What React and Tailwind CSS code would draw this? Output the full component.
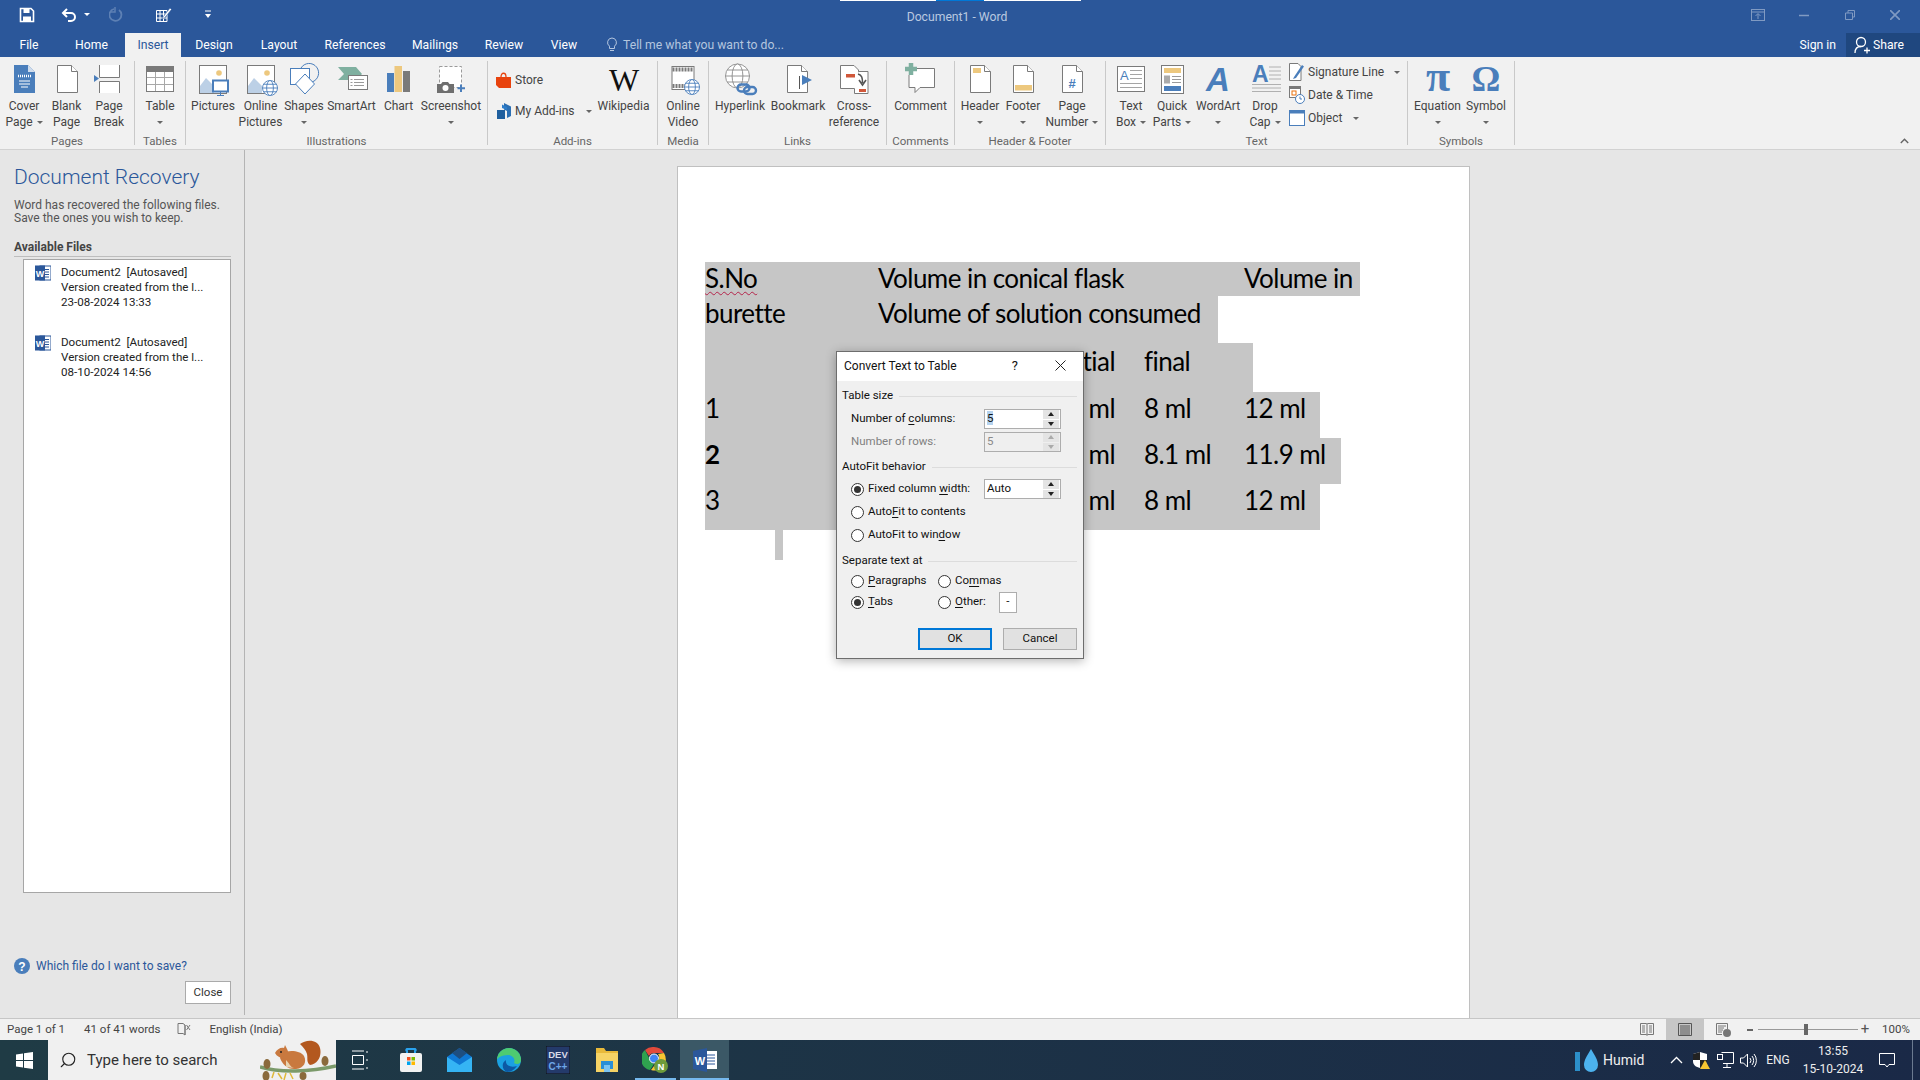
import React from 'react';
import { Search } from 'lucide-react';

const BLUE = '#4a7ebb';
const LINE = '#7a7a7a';
const YEL = '#edc87e';

const Svg = ({ children }) => (
  <svg width="40" height="37" viewBox="0 0 40 37" className="shrink-0 overflow-visible">{children}</svg>
);

const Page = ({ x = 10, fill = '#fff', stroke = LINE }) => (
  <>
    <path d={`M${x + 0.5} 4.5H${x + 14.5}L${x + 20.5} 10.5V31.5H${x + 0.5}Z`} fill={fill} stroke={stroke} />
    <path d={`M${x + 14.5} 4.5V10.5H${x + 20.5}`} fill="#fff" stroke={stroke} />
  </>
);

const Globe = ({ cx, cy, r, c = BLUE }) => (
  <g fill="#fff" stroke={c} strokeWidth="0.9">
    <circle cx={cx} cy={cy} r={r} />
    <ellipse cx={cx} cy={cy} rx={r * 0.45} ry={r} />
    <path d={`M${cx - r} ${cy}H${cx + r}M${cx - r * 0.85} ${cy - r * 0.5}H${cx + r * 0.85}M${cx - r * 0.85} ${cy + r * 0.5}H${cx + r * 0.85}`} />
  </g>
);

const icons = {
  cover: (
    <Svg>
      <path d="M10 4H24L31 11V32H10Z" fill={BLUE} />
      <path d="M24 4V11H31Z" fill="#cfdcec" />
      <path d="M14 15H27" stroke="#fff" strokeWidth="2.5" strokeDasharray="1 1" />
      <path d="M15 20H26M15 23H26M17 26H24" stroke="#fff" />
    </Svg>
  ),
  blank: <Svg><Page x={10} /></Svg>,
  pagebreak: (
    <Svg>
      <path d="M10.5 4V16.5H30.5V4M10.5 32V20.5H30.5V32" fill="#fff" stroke={LINE} />
      <path d="M5 14L10 17.5L5 21Z" fill={BLUE} />
    </Svg>
  ),
  table: (
    <Svg>
      <rect x="6.5" y="5.5" width="27" height="25" fill="#fff" stroke={LINE} />
      <rect x="6" y="5" width="28" height="6" fill="#7a7a7a" />
      <path d="M7 16.5H33M7 23.5H33M15.5 11V30M24.5 11V30" stroke="#a8a8a8" />
    </Svg>
  ),
  pictures: (
    <Svg>
      <rect x="6.5" y="4.5" width="27" height="28" fill="#fff" stroke={LINE} />
      <circle cx="26" cy="12" r="2.8" fill={YEL} />
      <path d="M7 32V25L13 17L21 25V32Z" fill="#bcd0e6" />
      <rect x="20" y="19.5" width="15" height="11" fill="#fff" stroke={BLUE} strokeWidth="2" />
      <path d="M27.5 31V34M24 34.5H31" stroke={BLUE} />
    </Svg>
  ),
  online: (
    <Svg>
      <rect x="6.5" y="4.5" width="27" height="28" fill="#fff" stroke={LINE} />
      <circle cx="26" cy="12" r="2.8" fill={YEL} />
      <path d="M7 32V25L13 17L21 25V32Z" fill="#bcd0e6" />
      <Globe cx={29} cy={27} r={7.5} />
    </Svg>
  ),
  shapes: (
    <Svg>
      <path d="M17 7A9.5 9.5 0 1 1 28 21" fill="none" stroke={BLUE} />
      <rect x="6.5" y="7.5" width="19" height="16" fill="#fff" stroke={BLUE} />
      <path d="M21 13L30.5 23L21 33L11.5 23Z" fill="#fff" stroke={BLUE} />
    </Svg>
  ),
  smartart: (
    <Svg>
      <path d="M6 6H24L30 13L24 19H6L12 13Z" fill="#7fb0a0" />
      <rect x="16.5" y="14.5" width="19" height="14" fill="#fff" stroke={LINE} />
      <path d="M22 18.5H32M22 21.5H32M22 24.5H32M18.5 18.5H20.5M18.5 21.5H20.5M18.5 24.5H20.5" stroke="#9a9a9a" />
    </Svg>
  ),
  chart: (
    <Svg>
      <rect x="8" y="12" width="7" height="19" fill={BLUE} />
      <rect x="15.5" y="5" width="7.5" height="26" fill={YEL} />
      <rect x="24" y="10" width="7" height="21" fill="#7a7a7a" />
    </Svg>
  ),
  screenshot: (
    <Svg>
      <rect x="8.5" y="5.5" width="22" height="21" fill="#fff" stroke="#9a9a9a" strokeDasharray="3 2" />
      <path d="M6 23H10L11.5 21H17L18.5 23H23V32H6Z" fill="#6f6f6f" />
      <circle cx="14.5" cy="27" r="3" fill="#fff" />
      <path d="M30 23.5V31M26.5 27.3H34" stroke={BLUE} strokeWidth="2" />
    </Svg>
  ),
  video: (
    <Svg>
      <rect x="9" y="5.5" width="22" height="23" fill="#fff" stroke={LINE} />
      <path d="M9.5 8.5H30.5M9.5 25H30.5" stroke={LINE} strokeWidth="4" strokeDasharray="2 1" />
      <Globe cx={29} cy={26} r={7.5} />
    </Svg>
  ),
  hyperlink: (
    <Svg>
      <Globe cx={17.5} cy={15} r={12} c="#8a8a8a" />
      <rect x="17.5" y="23.5" width="12" height="7" rx="3.5" fill="none" stroke={BLUE} strokeWidth="2.4" />
      <rect x="24" y="26" width="12" height="7" rx="3.5" fill="none" stroke={BLUE} strokeWidth="2.4" />
    </Svg>
  ),
  bookmark: (
    <Svg>
      <Page x={9} />
      <path d="M21.5 15V28" stroke="#555" />
      <path d="M24 14L34 19L24 24Z" fill={BLUE} />
    </Svg>
  ),
  crossref: (
    <Svg>
      <path d="M6.5 4.5H20L24.5 9V27.5H6.5Z" fill="#fff" stroke={LINE} />
      <path d="M24.5 10.5H34V32.5H20.5V27.5" fill="#fff" stroke={LINE} />
      <rect x="12" y="13" width="9" height="3.5" fill="#d0573a" />
      <rect x="25" y="28" width="7" height="3" fill="#d0573a" />
      <path d="M24 13C28 14 28.5 17 28.5 22M25 19L28.5 24L32 19" fill="none" stroke="#555" strokeWidth="1.6" />
    </Svg>
  ),
  comment: (
    <Svg>
      <path d="M10.5 7.5H33.5V26.5H19L14 31.5V26.5H8V14" fill="#fff" stroke={LINE} />
      <path d="M10 2V14M4 8H16" stroke="#7fb0a0" strokeWidth="4.5" />
    </Svg>
  ),
  header: <Svg><Page x={10} /><rect x="13" y="7" width="8" height="5" fill={YEL} /></Svg>,
  footer: <Svg><Page x={10} /><rect x="12" y="24" width="17" height="5.5" fill={YEL} /></Svg>,
  pagenum: (
    <Svg>
      <Page x={10} />
      <text x="20" y="27" textAnchor="middle" fontSize="13" fontWeight="700" fill={BLUE} fontFamily="Liberation Sans, sans-serif">#</text>
    </Svg>
  ),
  textbox: (
    <Svg>
      <rect x="6.5" y="5.5" width="27" height="25" fill="#fff" stroke={LINE} />
      <text x="9" y="19" fontSize="13" fill={BLUE} fontFamily="Liberation Sans, sans-serif">A</text>
      <path d="M19 9.5H31M19 13.5H31M19 17.5H31M9 22.5H31M9 26.5H31" stroke="#a5a5a5" />
    </Svg>
  ),
  quick: (
    <Svg>
      <rect x="9.5" y="4.5" width="22" height="28" fill="#fff" stroke={LINE} />
      <rect x="12" y="7" width="17" height="5" fill={YEL} />
      <rect x="12" y="14.5" width="6" height="8" fill="#aaa" />
      <path d="M20 15.5H29M20 18.5H29M20 21.5H29" stroke="#9a9a9a" />
      <rect x="12" y="25" width="17" height="5" fill={BLUE} />
    </Svg>
  ),
  wordart: (
    <Svg>
      <text x="20" y="30" textAnchor="middle" fontSize="33" fontWeight="700" fontStyle="italic" fill={BLUE} fontFamily="Liberation Sans, sans-serif">A</text>
    </Svg>
  ),
  dropcap: (
    <Svg>
      <text x="7" y="21" fontSize="23" fontWeight="700" fill={BLUE} fontFamily="Liberation Sans, sans-serif">A</text>
      <path d="M24 6H36M24 10H36M24 14H36M24 18H36M7 23.5H36M7 27H36M7 30.5H36" stroke="#b0b0b0" />
    </Svg>
  ),
  pi: (
    <Svg>
      <text x="20" y="30" textAnchor="middle" fontSize="44" fontWeight="700" fill={BLUE} fontFamily="Liberation Serif, serif">π</text>
    </Svg>
  ),
  omega: (
    <Svg>
      <text x="20" y="30" textAnchor="middle" fontSize="36" fontWeight="700" fill={BLUE} fontFamily="Liberation Serif, serif">Ω</text>
    </Svg>
  ),
};

const Caret = ({ className = '' }) => (
  <span className={`inline-block w-0 h-0 border-x-[3px] border-t-[3px] border-x-transparent border-t-[#666] align-middle ${className}`} />
);

// one big ribbon button: icon, up to two label lines, optional caret
function Btn({ w, icon, lines, caret }) {
  return (
    <div className="flex flex-col items-center shrink-0" style={{ width: w }}>
      <div className="h-[37px] flex justify-center w-full">{icons[icon]}</div>
      {lines.map((l, i) => (
        <div key={i} className="h-4 leading-4 whitespace-nowrap">
          {l}
          {caret && lines.length === 2 && i === 1 && <Caret className="ml-1" />}
        </div>
      ))}
      {caret && lines.length === 1 && <div className="h-4 leading-4"><Caret /></div>}
    </div>
  );
}

function Group({ w, label, pl = 0, children }) {
  return (
    <div className="h-[84px] flex flex-col border-r border-[#c9c9c9] shrink-0" style={{ width: w }}>
      <div className="h-[69px] flex" style={{ paddingLeft: pl }}>{children}</div>
      <div className="h-[15px] leading-[22px] text-center text-[11.5px] text-[#666]">{label}</div>
    </div>
  );
}

const Tab = ({ w, children, active }) => (
  <div
    className={`h-6 flex items-center justify-center shrink-0 ${active ? 'bg-[#f1f1f1] text-[#2b579a]' : 'text-white'}`}
    style={{ width: w }}
  >
    {children}
  </div>
);

function TitleBar() {
  return (
    <div className="h-[57px] bg-[#2b579a] flex flex-col relative text-[12.2px] shrink-0">
      <div className="absolute top-0 left-[840px] flex h-px">
        <div className="w-[96px] bg-white" />
        <div className="w-[48px] bg-[#0078d7]" />
        <div className="w-[97px] bg-white" />
      </div>
      <div className="h-[33px] flex items-center -mt-[2px]">
        <div className="flex-1 flex items-center">
          <svg width="16" height="16" viewBox="0 0 16 16" className="ml-[19px]">
            <path d="M1.5 1.5H12L14.5 4V14.5H1.5Z" fill="none" stroke="#fff" strokeWidth="1.6" />
            <rect x="4.5" y="2" width="6" height="4" fill="#fff" />
            <rect x="4" y="9.5" width="8" height="5" fill="#fff" />
          </svg>
          <svg width="16" height="14" viewBox="0 0 16 14" className="ml-[26px]">
            <path d="M6 1L2 5L6 9" fill="none" stroke="#fff" strokeWidth="2" />
            <path d="M2 5H10A3.8 3.8 0 0 1 10 13H7" fill="none" stroke="#fff" strokeWidth="2" />
          </svg>
          <Caret className="ml-[7px] !border-t-white" />
          <svg width="14" height="16" viewBox="0 0 14 16" className="ml-[19px] opacity-40">
            <path d="M5 2A6 6 0 1 0 10 3" fill="none" stroke="#a9bfdc" strokeWidth="1.8" />
            <path d="M6 0V5H1" fill="none" stroke="#a9bfdc" strokeWidth="1.5" />
          </svg>
          <svg width="18" height="18" viewBox="0 0 18 18" className="ml-[31px]">
            <path d="M2.5 4.5H13V15.5H2.5Z M2.5 8H13M2.5 12H13M6 4.5V15.5M9.5 4.5V15.5" fill="none" stroke="#fff" />
            <path d="M9 11L16 2L17.5 3.5L10.5 12L8.5 12.5Z" fill="#fff" stroke="#2b579a" strokeWidth="0.5" />
          </svg>
          <svg width="8" height="9" viewBox="0 0 8 9" className="ml-[32px]">
            <path d="M1 1H7" stroke="#fff" />
            <path d="M1 4H7L4 8Z" fill="#fff" />
          </svg>
        </div>
        <div className="text-[#b9c9e0] ml-[14px] mt-[5px]">Document1 - Word</div>
        <div className="flex-1 flex items-center justify-end pr-[20px] gap-[33px] opacity-40 text-white">
          <svg width="14" height="12" viewBox="0 0 14 12">
            <rect x="0.5" y="0.5" width="13" height="11" fill="none" stroke="#fff" />
            <path d="M0.5 3H13.5M7 10V5M4.5 7L7 4.5L9.5 7" fill="none" stroke="#fff" />
          </svg>
          <svg width="10" height="10" viewBox="0 0 10 10" className="ml-[1px]"><path d="M0 5.5H10" stroke="#fff" strokeWidth="1.5" /></svg>
          <svg width="10" height="10" viewBox="0 0 10 10" className="ml-[3px]">
            <path d="M0.5 3H7.5V9.5H0.5ZM3 3V0.5H9.5V7H7.5" fill="none" stroke="#fff" />
          </svg>
          <svg width="10" height="10" viewBox="0 0 10 10" className="ml-[2px]">
            <path d="M0 0L10 10M10 0L0 10" stroke="#fff" strokeWidth="1.6" />
          </svg>
        </div>
      </div>
      <div className="h-6 mt-[2px] flex items-center">
        <Tab w={58}>File</Tab>
        <Tab w={67}>Home</Tab>
        <Tab w={56} active>Insert</Tab>
        <Tab w={66}>Design</Tab>
        <Tab w={64}>Layout</Tab>
        <Tab w={88}>References</Tab>
        <Tab w={72}>Mailings</Tab>
        <Tab w={66}>Review</Tab>
        <Tab w={54}>View</Tab>
        <svg width="12" height="16" viewBox="0 0 12 16" className="ml-[15px]">
          <path d="M6 1A4.5 4.5 0 0 0 3.5 9.2V11.5H8.5V9.2A4.5 4.5 0 0 0 6 1ZM4 13.5H8" fill="none" stroke="#b4c6df" />
        </svg>
        <span className="ml-[5px] text-[#b4c6df]">Tell me what you want to do...</span>
        <div className="ml-auto flex items-center h-6">
          <span className="text-white mr-[10px]">Sign in</span>
          <div className="w-[74px] h-6 bg-[#1f477f] flex items-center text-white pl-2">
            <svg width="16" height="18" viewBox="0 0 16 18">
              <circle cx="7" cy="6" r="4.5" fill="none" stroke="#fff" strokeWidth="1.3" />
              <path d="M1 17C1 12 4 10.5 7 10.5M10 14.5H16M13 11.5V17.5" fill="none" stroke="#fff" strokeWidth="1.3" />
            </svg>
            <span className="ml-[3px]">Share</span>
          </div>
        </div>
      </div>
    </div>
  );
}

function Ribbon() {
  return (
    <div className="h-[93px] bg-[#f1f1f1] border-b border-[#d2d2d2] pt-1 flex text-[12px] text-[#444] shrink-0 relative">
      <Group w={135} label="Pages" pl={3}>
        <Btn w={42} icon="cover" lines={['Cover', 'Page']} caret />
        <Btn w={43} icon="blank" lines={['Blank', 'Page']} />
        <Btn w={42} icon="pagebreak" lines={['Page', 'Break']} />
      </Group>
      <Group w={51} label="Tables">
        <Btn w={50} icon="table" lines={['Table']} caret />
      </Group>
      <Group w={302} label="Illustrations" pl={3}>
        <Btn w={48} icon="pictures" lines={['Pictures']} />
        <Btn w={47} icon="online" lines={['Online', 'Pictures']} />
        <Btn w={40} icon="shapes" lines={['Shapes']} caret />
        <Btn w={55} icon="smartart" lines={['SmartArt']} />
        <Btn w={39} icon="chart" lines={['Chart']} />
        <Btn w={66} icon="screenshot" lines={['Screenshot']} caret />
      </Group>
      <Group w={170} label="Add-ins" pl={8}>
        <div className="w-[101px] shrink-0 flex flex-col">
          <div className="h-[18px] mt-[10px] flex items-center">
            <svg width="16" height="18" viewBox="0 0 16 18">
              <path d="M0 6H15V17H3L0 14Z" fill="#e8430e" />
              <path d="M5 6C5 1 10 1 10 6" fill="none" stroke="#e8430e" strokeWidth="1.3" />
            </svg>
            <span className="ml-[3px]">Store</span>
          </div>
          <div className="h-[18px] mt-[13px] flex items-center">
            <svg width="16" height="17" viewBox="0 0 16 17">
              <path d="M8 0L15 3.5V13L11 15V8L8 6.5V0Z" fill="#2b6fb3" />
              <rect x="1" y="7" width="8" height="9" fill="#1f5f9e" />
              <path d="M6 1.5L11 4V7L6 5Z" fill="#2b7cc9" />
            </svg>
            <span className="ml-[3px]">My Add-ins</span>
            <Caret className="ml-[11px]" />
          </div>
        </div>
        <div className="w-[53px] shrink-0 flex flex-col items-center">
          <div className="h-[37px] flex justify-center w-full">
            <Svg>
              <text x="20" y="30" textAnchor="middle" fontSize="32" fill="#111" fontFamily="Liberation Serif, serif">W</text>
            </Svg>
          </div>
          <div className="h-4 leading-4">Wikipedia</div>
        </div>
      </Group>
      <Group w={51} label="Media">
        <Btn w={50} icon="video" lines={['Online', 'Video']} />
      </Group>
      <Group w={178} label="Links" pl={2}>
        <Btn w={58} icon="hyperlink" lines={['Hyperlink']} />
        <Btn w={58} icon="bookmark" lines={['Bookmark']} />
        <Btn w={54} icon="crossref" lines={['Cross-', 'reference']} />
      </Group>
      <Group w={68} label="Comments">
        <Btn w={67} icon="comment" lines={['Comment']} />
      </Group>
      <Group w={151} label="Header & Footer" pl={2}>
        <Btn w={46} icon="header" lines={['Header']} caret />
        <Btn w={40} icon="footer" lines={['Footer']} caret />
        <Btn w={58} icon="pagenum" lines={['Page', 'Number']} caret />
      </Group>
      <Group w={302} label="Text" pl={4}>
        <Btn w={42} icon="textbox" lines={['Text', 'Box']} caret />
        <Btn w={40} icon="quick" lines={['Quick', 'Parts']} caret />
        <Btn w={52} icon="wordart" lines={['WordArt']} caret />
        <Btn w={42} icon="dropcap" lines={['Drop', 'Cap']} caret />
        <div className="flex flex-col pl-[3px] pt-[2px] gap-[5px] w-[115px]">
          <div className="h-[18px] flex items-center">
            <svg width="16" height="18" viewBox="0 0 16 18">
              <path d="M0.5 0.5H9L12 3.5V17.5H0.5Z" fill="#fff" stroke={LINE} />
              <path d="M5 14L13 2L15 3.5L7 15L4 16Z" fill={BLUE} />
            </svg>
            <span className="ml-[3px]">Signature Line</span>
            <Caret className="ml-[10px]" />
          </div>
          <div className="h-[18px] flex items-center">
            <svg width="16" height="18" viewBox="0 0 16 18">
              <rect x="0.5" y="0.5" width="11" height="11" fill="#fff" stroke={LINE} />
              <rect x="0" y="0" width="12" height="3" fill="#7a7a7a" />
              <rect x="3" y="5" width="4" height="4" fill="none" stroke="#e8710e" />
              <circle cx="11" cy="13" r="4.5" fill="#fff" stroke={BLUE} />
              <path d="M11 10.5V13H13" fill="none" stroke={BLUE} />
            </svg>
            <span className="ml-[3px]">Date &amp; Time</span>
          </div>
          <div className="h-[18px] flex items-center">
            <svg width="16" height="16" viewBox="0 0 16 16">
              <rect x="0.5" y="0.5" width="15" height="15" fill="#fff" stroke={BLUE} />
              <rect x="0" y="0" width="16" height="3.5" fill={BLUE} />
            </svg>
            <span className="ml-[3px]">Object</span>
            <Caret className="ml-[11px]" />
          </div>
        </div>
      </Group>
      <Group w={107} label="Symbols" pl={6}>
        <Btn w={47} icon="pi" lines={['Equation']} caret />
        <Btn w={50} icon="omega" lines={['Symbol']} caret />
      </Group>
      <div className="ml-auto self-end pr-[11px] pb-[5px]">
        <svg width="9" height="6" viewBox="0 0 9 6"><path d="M0.8 5L4.5 1.3L8.2 5" fill="none" stroke="#666" strokeWidth="1.4" /></svg>
      </div>
    </div>
  );
}

const WordDoc = () => (
  <svg width="16" height="16" viewBox="0 0 16 16" className="shrink-0 -mt-[1px]">
    <rect x="5" y="1" width="11" height="14" fill="#fff" stroke="#2b579a" />
    <path d="M8 4.5H14M8 7H14M8 9.5H14M8 12H14" stroke="#2b579a" />
    <rect x="0" y="0.5" width="10" height="15" fill="#2b579a" />
    <text x="5" y="11.5" textAnchor="middle" fontSize="9" fontWeight="700" fill="#fff" fontFamily="Liberation Sans, sans-serif">W</text>
  </svg>
);

const RecoveryItem = ({ date }) => (
  <div className="flex h-[58px] pl-[11px]">
    <WordDoc />
    <div className="ml-[10px] text-[11.6px] leading-[15px] text-[#222] -mt-[1px]">
      <div className="whitespace-pre">Document2  [Autosaved]</div>
      <div>Version created from the l...</div>
      <div>{date}</div>
    </div>
  </div>
);

function RecoveryPane() {
  return (
    <div className="w-[245px] h-full pb-[3px] shrink-0">
      <div className="h-full border-r border-[#b4b4b4] flex flex-col pl-[14px] pr-[13px] pt-[13px]">
        <div className="text-[21px] font-light leading-[26px] text-[#2b579a] mt-[1px]">Document Recovery</div>
        <div className="mt-[9px] text-[12px] leading-[13px] text-[#555]">
          <div>Word has recovered the following files.</div>
          <div>Save the ones you wish to keep.</div>
        </div>
        <div className="mt-[14px] text-[12px] font-bold text-[#444] leading-[16px] pb-[1px] border-b border-[#bdbdbd]">Available Files</div>
        <div className="mt-[2px] ml-[9px] h-[634px] bg-white border border-[#a6a6a6] pt-[6px]">
          <RecoveryItem date="23-08-2024 13:33" />
          <div className="h-3" />
          <RecoveryItem date="08-10-2024 14:56" />
        </div>
        <div className="mt-[64px] flex items-center h-[18px]">
          <svg width="16" height="16" viewBox="0 0 16 16" className="shrink-0">
            <circle cx="8" cy="8" r="8" fill={BLUE} />
            <text x="8" y="12.5" textAnchor="middle" fontSize="12" fontWeight="700" fill="#fff" fontFamily="Liberation Sans, sans-serif">?</text>
          </svg>
          <span className="ml-[6px] text-[12px] text-[#2b579a]">Which file do I want to save?</span>
        </div>
        <div className="self-end mt-[6px] w-[46px] h-[23px] bg-white border border-[#aaa] text-[11.5px] text-[#333] flex items-center justify-center">Close</div>
      </div>
    </div>
  );
}

function DocRow({ w, h, pb = 0, children }) {
  return (
    <div className="flex items-center bg-[#c6c6c6] leading-none text-black" style={{ width: w, height: h, paddingBottom: pb }}>
      {children}
    </div>
  );
}

function Document() {
  return (
    <div className="flex-1 h-full pl-[432px] pt-[16px]">
      <div className="w-[793px] h-full bg-white border-x border-t border-[#c0c0c0] pl-[27px] pt-[95px] text-[26px] font-['Lato',sans-serif] tracking-[-0.55px]">
        <DocRow w={655} h={34} pb={2}>
          <div className="w-[173px]"><span className="underline decoration-wavy decoration-[#b4234a] decoration-1 underline-offset-[3px]">S.No</span></div>
          <div className="w-[366px]">Volume in conical flask</div>
          <div>Volume in</div>
        </DocRow>
        <DocRow w={513} h={47} pb={14}>
          <div className="w-[173px]">burette</div>
          <div>Volume of solution consumed</div>
        </DocRow>
        <DocRow w={548} h={49} pb={14}>
          <div className="w-[410px] text-right">tial</div>
          <div className="ml-[29px]">final</div>
        </DocRow>
        <DocRow w={615} h={46} pb={15}>
          <div className="w-[173px]">1</div>
          <div className="w-[237px] text-right">ml</div>
          <div className="ml-[29px] w-[100px]">8 ml</div>
          <div>12 ml</div>
        </DocRow>
        <DocRow w={636} h={46} pb={15}>
          <div className="w-[173px] font-bold">2</div>
          <div className="w-[237px] text-right">ml</div>
          <div className="ml-[29px] w-[100px]">8.1 ml</div>
          <div>11.9 ml</div>
        </DocRow>
        <DocRow w={615} h={46} pb={15}>
          <div className="w-[173px]">3</div>
          <div className="w-[237px] text-right">ml</div>
          <div className="ml-[29px] w-[100px]">8 ml</div>
          <div>12 ml</div>
        </DocRow>
        <div className="ml-[70px] w-2 h-[30px] bg-[#c6c6c6]" />
      </div>
    </div>
  );
}

const Radio = ({ on }) => (
  <span className="w-[13px] h-[13px] rounded-full border border-[#333] bg-white flex items-center justify-center shrink-0">
    {on && <span className="w-[7px] h-[7px] rounded-full bg-[#333]" />}
  </span>
);

const Fieldset = ({ title }) => (
  <div className="flex items-center h-4 pl-[5px] pr-[6px]">
    <span>{title}</span>
    <span className="flex-1 h-px bg-[#dcdcdc] ml-[6px]" />
  </div>
);

const Spin = ({ value, disabled, selected }) => (
  <div className={`ml-auto w-[77px] h-[20px] border border-[#adadad] flex items-center pr-px ${disabled ? 'bg-[#efefef]' : 'bg-white'}`}>
    <span className={`flex-1 pl-[2px] ${disabled ? 'text-[#8a8a8a]' : ''}`}>
      {selected ? <span className="bg-[#b5d3ef]">{value}</span> : value}
    </span>
    <div className="w-4 h-[18px] flex flex-col gap-px">
      {[0, 1].map((i) => (
        <div key={i} className="flex-1 bg-[#e4e4e4] flex items-center justify-center">
          <span className={`w-0 h-0 border-x-[3px] border-x-transparent ${i === 0 ? 'border-b-[4px]' : 'border-t-[4px]'} ${disabled ? 'border-b-[#aaa] border-t-[#aaa]' : 'border-b-[#222] border-t-[#222]'}`} />
        </div>
      ))}
    </div>
  </div>
);

const U = ({ children }) => <span className="underline underline-offset-2">{children}</span>;

function Dialog() {
  return (
    <div className="absolute left-[836px] top-[351px] w-[248px] h-[308px] bg-[#f0f0f0] border border-[#6d6d6d] shadow-[0_2px_10px_rgba(0,0,0,0.3)] text-[11.5px] text-[#111] flex flex-col">
      <div className="h-[29px] bg-white flex items-center pl-[7px] shrink-0">
        <span className="text-[12px] -mt-[2px]">Convert Text to Table</span>
        <span className="ml-auto text-[13px] mr-[37px] -mt-[2px]">?</span>
        <svg width="11" height="11" viewBox="0 0 11 11" className="mr-[17px] -mt-[2px]"><path d="M0.5 0.5L10.5 10.5M10.5 0.5L0.5 10.5" stroke="#222" /></svg>
      </div>
      <div className="mt-[7px]"><Fieldset title="Table size" /></div>
      <div className="mt-[5px] h-5 flex items-center pl-[14px] pr-[22px]">
        <span>Number of <U>c</U>olumns:</span>
        <Spin value="5" selected />
      </div>
      <div className="mt-[3px] h-5 flex items-center pl-[14px] pr-[22px] text-[#808080]">
        <span>Number of rows:</span>
        <Spin value="5" disabled />
      </div>
      <div className="mt-[7px]"><Fieldset title="AutoFit behavior" /></div>
      <div className="mt-[4px] h-5 flex items-center pl-[14px] pr-[22px] gap-[4px]">
        <Radio on />
        <span>Fixed column <U>w</U>idth:</span>
        <Spin value="Auto" />
      </div>
      <div className="mt-[3px] h-5 flex items-center pl-[14px] gap-[4px]">
        <Radio />
        <span>Auto<U>F</U>it to contents</span>
      </div>
      <div className="mt-[3px] h-5 flex items-center pl-[14px] gap-[4px]">
        <Radio />
        <span>AutoFit to win<U>d</U>ow</span>
      </div>
      <div className="mt-[8px]"><Fieldset title="Separate text at" /></div>
      <div className="mt-[2px] h-[20px] flex items-center pl-[14px]">
        <div className="w-[87px] flex items-center gap-[4px]"><Radio /><span><U>P</U>aragraphs</span></div>
        <div className="flex items-center gap-[4px]"><Radio /><span>Co<U>m</U>mas</span></div>
      </div>
      <div className="h-[22px] flex items-center pl-[14px]">
        <div className="w-[87px] flex items-center gap-[4px]"><Radio on /><span><U>T</U>abs</span></div>
        <div className="flex items-center gap-[4px]"><Radio /><span><U>O</U>ther:</span></div>
        <div className="ml-[13px] w-[18px] h-[21px] bg-white border border-[#adadad] flex items-center justify-center">-</div>
      </div>
      <div className="mt-[15px] flex pl-[81px] gap-[11px]">
        <div className="w-[74px] h-[22px] bg-[#e1e1e1] border-2 border-[#0078d7] flex items-center justify-center">OK</div>
        <div className="w-[74px] h-[22px] bg-[#e1e1e1] border border-[#adadad] flex items-center justify-center">Cancel</div>
      </div>
    </div>
  );
}

function StatusBar() {
  return (
    <div className="h-[22px] bg-[#f1f1f1] border-t border-[#c6c6c6] flex items-center text-[11.5px] text-[#444] shrink-0">
      <span className="ml-[7px]">Page 1 of 1</span>
      <span className="ml-[19px]">41 of 41 words</span>
      <svg width="14" height="16" viewBox="0 0 14 16" className="ml-[17px]">
        <path d="M1 1.5H6L8 3V13L6 11.5H1ZM8 3V13" fill="none" stroke="#777" />
        <path d="M9.5 3L13 8M13 3L9.5 8" stroke="#777" />
      </svg>
      <span className="ml-[18px]">English (India)</span>
      <div className="ml-auto flex items-center h-full">
        <div className="w-[38px] h-full flex items-center justify-center">
          <svg width="14" height="13" viewBox="0 0 14 13">
            <path d="M0.5 0.5H6.5L7 1.5L7.5 0.5H13.5V11.5H7.5L7 12.5L6.5 11.5H0.5ZM7 1.5V11.5M2 3H5M2 5H5M2 7H5M2 9H5M9 3H12M9 5H12M9 7H12M9 9H12" fill="none" stroke="#777" />
          </svg>
        </div>
        <div className="w-[38px] h-full bg-[#c6c6c6] flex items-center justify-center">
          <svg width="14" height="13" viewBox="0 0 14 13">
            <path d="M0.5 0.5H13.5V12.5H0.5ZM2 3H12M2 5H12M2 7H12M2 9H12M2 11H12" fill="none" stroke="#555" />
          </svg>
        </div>
        <div className="w-[38px] h-full flex items-center justify-center">
          <svg width="15" height="14" viewBox="0 0 15 14">
            <path d="M0.5 0.5H11.5V6M0.5 0.5V11.5H6M2 3H10M2 5H8M2 7H7M2 9H6" fill="none" stroke="#777" />
            <circle cx="11" cy="10" r="4" fill="#777" />
          </svg>
        </div>
        <div className="w-4 flex justify-center"><span className="w-[6px] h-[2px] bg-[#666]" /></div>
        <div className="w-[100px] h-px bg-[#999] relative">
          <span className="absolute left-[46px] -top-[5px] w-1 h-[11px] bg-[#666]" />
        </div>
        <div className="w-[14px] text-center text-[15px] leading-none text-[#555]">+</div>
        <div className="w-[48px] text-center">100%</div>
      </div>
    </div>
  );
}

const TaskIcon = ({ children, active, under }) => (
  <div className={`w-[49px] h-full flex items-center justify-center shrink-0 relative ${active ? 'bg-[#3b5866]' : ''}`}>
    {children}
    {under && <span className={`absolute bottom-0 h-[2px] bg-[#76b9ed] ${active ? 'inset-x-0' : 'inset-x-1'}`} />}
  </div>
);

function Taskbar() {
  return (
    <div className="h-10 bg-gradient-to-r from-[#1f3b45] to-[#1a2947] flex items-center text-white shrink-0">
      <div className="w-12 h-full flex items-center justify-center shrink-0">
        <svg width="17" height="17" viewBox="0 0 17 17">
          <path d="M0 2.4L7 1.4V8H0ZM8 1.3L17 0V8H8ZM0 9H7V15.6L0 14.6ZM8 9H17V17L8 15.7Z" fill="#fff" />
        </svg>
      </div>
      <div className="w-[288px] h-full bg-[#f0f0f0] flex items-center relative overflow-hidden shrink-0">
        <Search size={18} strokeWidth={1.5} className="ml-[11px] text-[#222] -scale-x-100" />
        <span className="ml-[10px] text-[15px] text-[#333]">Type here to search</span>
        <svg width="76" height="40" viewBox="0 0 76 40" className="absolute right-0 top-0">
          <path d="M0 27C20 33 50 32 76 26" fill="none" stroke="#7b9a6a" strokeWidth="3.5" />
          <path d="M40 4C46 -1 58 -1 60 8C62 16 58 24 50 25C46 22 48 18 47 14C46 10 43 7 40 4Z" fill="#b3581f" />
          <path d="M22 13C28 10 40 10 44 16C47 22 44 28 36 29C28 30 22 24 20 18Z" fill="#c9793f" />
          <path d="M26 20C30 24 30 27 34 28L26 27Z" fill="#e8d3b0" />
          <path d="M15 13C17 9 21 7 24 8L25 5L27 9C29 12 28 16 26 18C22 19 17 17 15 13Z" fill="#c9793f" />
          <circle cx="21" cy="12" r="1" fill="#222" />
          <ellipse cx="7" cy="24" rx="3.5" ry="5" fill="#8a6a3c" />
          <ellipse cx="65" cy="21" rx="3.5" ry="5" fill="#8a6a3c" />
          <ellipse cx="6" cy="36" rx="3.5" ry="5" fill="#8a6a3c" />
          <ellipse cx="43" cy="36" rx="3.5" ry="4" fill="#8a6a3c" />
          <path d="M14 32L12 38M18 33L22 39M26 33L24 40M30 33L33 39" stroke="#e0b93a" strokeWidth="1.5" />
        </svg>
      </div>
      <div className="w-12 h-full flex items-center justify-center shrink-0">
        <svg width="16" height="20" viewBox="0 0 16 20">
          <path d="M0 1H12M0 19H12M0.5 5.5H11.5V14.5H0.5ZM15 1V3M15 9V11M15 17V19" fill="none" stroke="#fff" />
        </svg>
      </div>
      <div className="w-[2px]" />
      <TaskIcon>
        <svg width="24" height="24" viewBox="0 0 24 24">
          <path d="M8 6V3A1 1 0 0 1 9 1H15A1 1 0 0 1 16 3V6" fill="none" stroke="#2aa3ef" strokeWidth="2" />
          <rect x="1" y="5" width="22" height="19" rx="2" fill="#f2f2f2" />
          <rect x="8" y="9" width="3.5" height="3.5" fill="#f25022" />
          <rect x="12.5" y="9" width="3.5" height="3.5" fill="#7fba00" />
          <rect x="8" y="13.5" width="3.5" height="3.5" fill="#00a4ef" />
          <rect x="12.5" y="13.5" width="3.5" height="3.5" fill="#ffb900" />
        </svg>
      </TaskIcon>
      <TaskIcon>
        <svg width="25" height="24" viewBox="0 0 25 24">
          <path d="M0 9L12.5 0L25 9V24H0Z" fill="#0f78d4" />
          <path d="M0 9L12.5 17L25 9V24H0Z" fill="#35b4f4" />
          <path d="M5 5L12.5 0L20 5L12.5 11Z" fill="#1e4e80" />
        </svg>
      </TaskIcon>
      <TaskIcon>
        <svg width="24" height="24" viewBox="0 0 24 24">
          <circle cx="12" cy="12" r="12" fill="#1ba1e2" />
          <path d="M0 12A12 12 0 0 1 24 12C24 16 20 17 17 15C19 11 15 7 11 7C5 7 0 10 0 12Z" fill="#4ecb71" />
          <path d="M10 24C5 22 4 15 9 12C8 17 13 20 20 18C17 22 14 24 10 24Z" fill="#0c59a4" />
        </svg>
      </TaskIcon>
      <TaskIcon>
        <svg width="24" height="28" viewBox="0 0 24 28">
          <rect x="0" y="0" width="24" height="28" rx="1" fill="#243a6b" stroke="#111" />
          <text x="12" y="12" textAnchor="middle" fontSize="9.5" fontWeight="700" fill="#d9d9e8" fontFamily="Liberation Sans, sans-serif">DEV</text>
          <text x="12" y="24" textAnchor="middle" fontSize="10" fontWeight="700" fill="#6ea6e8" fontFamily="Liberation Sans, sans-serif">C++</text>
        </svg>
      </TaskIcon>
      <TaskIcon>
        <svg width="22" height="24" viewBox="0 0 22 24">
          <path d="M0 0H8L10 3H22V24H0Z" fill="#e8b93a" />
          <rect x="0" y="5" width="22" height="19" fill="#f6d365" />
          <rect x="5" y="13" width="12" height="8" fill="#2b8fd6" />
          <rect x="8" y="17" width="6" height="7" fill="#7cc4f2" />
        </svg>
      </TaskIcon>
      <TaskIcon under>
        <svg width="28" height="30" viewBox="0 0 28 30">
          <path d="M12 2A11.5 11.5 0 0 1 22 8H12A5.5 5.5 0 0 0 7 11L3 5A11.5 11.5 0 0 1 12 2Z" fill="#e24a3b" />
          <path d="M3 5L8 15A5.5 5.5 0 0 0 12 19L8 25A11.5 11.5 0 0 1 3 5Z" fill="#2fa24f" />
          <path d="M22 8A11.5 11.5 0 0 1 9 25L15 17A5.5 5.5 0 0 0 16 9Z" fill="#f7c531" />
          <circle cx="12" cy="13.5" r="4.5" fill="#3f85f4" stroke="#fff" />
          <circle cx="19" cy="21" r="7" fill="#6d9b3a" />
          <text x="19" y="24.5" textAnchor="middle" fontSize="9.5" fontWeight="700" fill="#fff" fontFamily="Liberation Sans, sans-serif">N</text>
        </svg>
      </TaskIcon>
      <TaskIcon active under>
        <svg width="24" height="24" viewBox="0 0 24 24">
          <rect x="9" y="3" width="15" height="18" fill="#fff" />
          <path d="M14 7H22M14 10H22M14 13H22M14 16H22" stroke="#2b579a" />
          <path d="M0 3L14 0V24L0 21Z" fill="#2b579a" />
          <text x="7" y="16.5" textAnchor="middle" fontSize="11" fontWeight="700" fill="#fff" fontFamily="Liberation Sans, sans-serif">W</text>
        </svg>
      </TaskIcon>
      <div className="ml-auto flex items-center h-full text-[#eee]">
        <div className="w-[34px] flex items-center justify-center">
          <svg width="26" height="25" viewBox="0 0 26 25">
            <rect x="2" y="4" width="5" height="19" fill="#2c8fc9" />
            <path d="M18 1C14 8 11 12 11 17A7 7 0 0 0 25 17C25 12 22 8 18 1Z" fill="#4cb2ee" />
          </svg>
        </div>
        <div className="w-[60px] text-[14px]">Humid</div>
        <div className="w-[26px] flex justify-center">
          <svg width="13" height="8" viewBox="0 0 13 8"><path d="M1 7L6.5 1.5L12 7" fill="none" stroke="#fff" strokeWidth="1.3" /></svg>
        </div>
        <div className="w-6 flex justify-center">
          <svg width="17" height="17" viewBox="0 0 17 17">
            <path d="M7 0L14 2V9C14 13 10 15 7 16C3 15 0 13 0 9V2Z" fill="#fff" />
            <path d="M7 0V8H0V2ZM7 8H14V9C14 13 10 15 7 16Z" fill="#222" />
            <path d="M12 8L17 17H7Z" fill="#f7c531" />
          </svg>
        </div>
        <div className="w-6 flex justify-center">
          <svg width="17" height="16" viewBox="0 0 17 16">
            <path d="M4.5 0.5H16.5V11.5H6M10 11.5V15M6 15.5H14" fill="none" stroke="#fff" />
            <rect x="0.5" y="2.5" width="5" height="5" fill="#1a2947" stroke="#fff" />
          </svg>
        </div>
        <div className="w-[23px] flex justify-center">
          <svg width="17" height="15" viewBox="0 0 17 15">
            <path d="M0.5 5H3.5L7.5 1V14L3.5 10H0.5Z M10 5A4 4 0 0 1 10 10M12 3A7 7 0 0 1 12 12M14 1A10 10 0 0 1 14 14" fill="none" stroke="#fff" />
          </svg>
        </div>
        <div className="w-9 text-center text-[12px]">ENG</div>
        <div className="w-[74px] text-center text-[12px] leading-[18px]">
          <div>13:55</div>
          <div>15-10-2024</div>
        </div>
        <div className="w-[34px] flex justify-center">
          <svg width="16" height="15" viewBox="0 0 16 15">
            <path d="M0.5 0.5H15.5V11.5H10L8 14L6 11.5H0.5Z" fill="none" stroke="#fff" />
          </svg>
        </div>
        <div className="w-4 h-full flex justify-center"><span className="w-px h-full bg-[#6b7a90]" /></div>
      </div>
    </div>
  );
}

export default function App() {
  return (
    <div className="w-screen h-screen relative flex flex-col overflow-hidden font-['Roboto',sans-serif] bg-[#e6e6e6]">
      <TitleBar />
      <Ribbon />
      <div className="flex-1 min-h-0 flex">
        <RecoveryPane />
        <Document />
      </div>
      <StatusBar />
      <Taskbar />
      <Dialog />
    </div>
  );
}
